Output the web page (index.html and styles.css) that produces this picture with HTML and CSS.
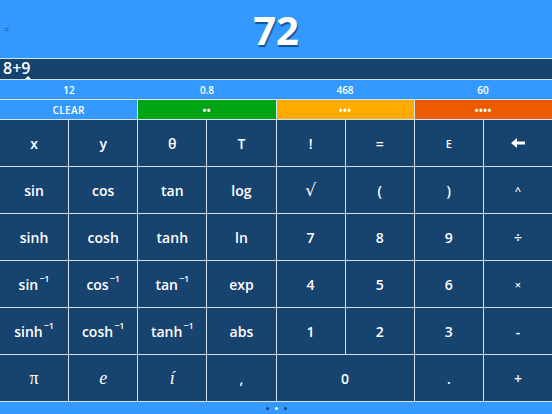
FILE: index.html
```html
<!DOCTYPE html>
<html>
<head>
<meta charset="utf-8">
<link rel="stylesheet" href="styles.css">
</head>
<body>
<div class="app">
  <header class="display">
    <span class="eq">=</span>
    <span class="result">72</span>
  </header>
  <div class="input">
    <span class="expr">8+9</span>
    <span class="caret"></span>
  </div>
  <div class="memory">
    <span>12</span><span>0.8</span><span>468</span><span>60</span>
  </div>
  <div class="tabs">
    <span class="tab clear">CLEAR</span>
    <span class="tab dots green">••</span>
    <span class="tab dots orange">•••</span>
    <span class="tab dots red">••••</span>
  </div>
  <div class="keys">
    <button class="key">x</button>
    <button class="key">y</button>
    <button class="key">θ</button>
    <button class="key">T</button>
    <button class="key">!</button>
    <button class="key">=</button>
    <button class="key small">E</button>
    <button class="key" aria-label="backspace">
      <svg class="arrow" width="14" height="10" viewBox="0 0 14 10"><path d="M0 5 L6 0 L6 3.4 L14 3.4 L14 6.6 L6 6.6 L6 10 Z" fill="#fff"/></svg>
    </button>

    <button class="key">sin</button>
    <button class="key">cos</button>
    <button class="key">tan</button>
    <button class="key">log</button>
    <button class="key root">√</button>
    <button class="key">(</button>
    <button class="key">)</button>
    <button class="key small">^</button>

    <button class="key">sinh</button>
    <button class="key">cosh</button>
    <button class="key">tanh</button>
    <button class="key">ln</button>
    <button class="key">7</button>
    <button class="key">8</button>
    <button class="key">9</button>
    <button class="key">÷</button>

    <button class="key">sin<sup>−1</sup></button>
    <button class="key">cos<sup>−1</sup></button>
    <button class="key">tan<sup>−1</sup></button>
    <button class="key">exp</button>
    <button class="key">4</button>
    <button class="key">5</button>
    <button class="key">6</button>
    <button class="key small">×</button>

    <button class="key">sinh<sup>−1</sup></button>
    <button class="key">cosh<sup>−1</sup></button>
    <button class="key">tanh<sup>−1</sup></button>
    <button class="key">abs</button>
    <button class="key">1</button>
    <button class="key">2</button>
    <button class="key">3</button>
    <button class="key">-</button>

    <button class="key serif">π</button>
    <button class="key serif italic">e</button>
    <button class="key serif italic">í</button>
    <button class="key">,</button>
    <button class="key wide">0</button>
    <button class="key">.</button>
    <button class="key">+</button>
  </div>
  <footer class="pager">
    <span class="dot"></span><span class="dot active"></span><span class="dot"></span>
  </footer>
</div>
</body>
</html>
```

FILE: styles.css
```css
* { box-sizing: border-box; }
html, body { margin: 0; padding: 0; }
body {
  width: 552px;
  height: 414px;
  overflow: hidden;
  background: #d3e3f1;
  font-family: "Open Sans", "Liberation Sans", sans-serif;
  color: #fff;
}
.app {
  display: flex;
  flex-direction: column;
  width: 552px;
  height: 414px;
  background: #d3e3f1;
  gap: 1px;
}
.display {
  height: 58px;
  background: #3399ff;
  display: flex;
  align-items: center;
  justify-content: center;
  position: relative;
}
.eq {
  position: absolute;
  left: 4px;
  top: 23px;
  font-size: 9px;
  color: #1a4a80;
}
.result {
  font-size: 40px;
  font-weight: 700;
  line-height: 1;
  text-shadow: 1px 2px 1px rgba(0, 30, 80, 0.6);
  margin-top: 1px;
}
.input {
  height: 20px;
  background: #17436f;
  display: flex;
  align-items: flex-start;
  padding-left: 3px;
  position: relative;
}
.expr {
  font-size: 16px;
  font-weight: 600;
  line-height: 18px;
}
.caret {
  position: absolute;
  left: 25px;
  bottom: 0;
  width: 0;
  height: 0;
  border-left: 3px solid transparent;
  border-right: 3px solid transparent;
  border-bottom: 3px solid #fff;
}
.memory {
  height: 19px;
  background: #3399ff;
  display: grid;
  grid-template-columns: repeat(4, 1fr);
  align-items: center;
  text-align: center;
  font-size: 10px;
  font-weight: 600;
}
.tabs {
  height: 19px;
  display: grid;
  grid-template-columns: repeat(4, 1fr);
  gap: 1px;
}
.tab {
  display: flex;
  align-items: center;
  justify-content: center;
  font-size: 10px;
  font-weight: 600;
  letter-spacing: 0.4px;
}
.tab.dots { font-size: 10px; font-weight: 700; letter-spacing: 0.5px; }
.tab.clear { background: #3399ff; }
.tab.green { background: #00a312; }
.tab.orange { background: #ffab00; }
.tab.red { background: #ee5a00; }
.keys {
  height: 281px;
  display: grid;
  grid-template-columns: repeat(8, 1fr);
  grid-template-rows: repeat(6, 1fr);
  gap: 1px;
}
.key {
  background: #17436f;
  border: 0;
  margin: 0;
  padding: 0;
  color: #fff;
  font-family: "Open Sans", "Liberation Sans", sans-serif;
  font-size: 14px;
  font-weight: 600;
  display: flex;
  align-items: center;
  justify-content: center;
}
.key sup {
  font-size: 9px;
  vertical-align: 0;
  position: relative;
  top: -6px;
  margin-left: 1px;
}
.key.small { font-size: 11px; }
.key.root { font-family: "DejaVu Serif", "Liberation Serif", serif; font-weight: 400; font-size: 17px; }
.key.serif { font-family: "Liberation Serif", serif; font-weight: 400; font-size: 18px; }
.key.italic { font-style: italic; }
.key.wide { grid-column: span 2; }
.arrow { display: block; }
.pager {
  flex: 1;
  background: #3399ff;
  display: flex;
  align-items: center;
  justify-content: center;
  gap: 6px;
}
.dot {
  width: 3px;
  height: 3px;
  border-radius: 50%;
  background: #17436f;
}
.dot.active { background: #fff; }
```
